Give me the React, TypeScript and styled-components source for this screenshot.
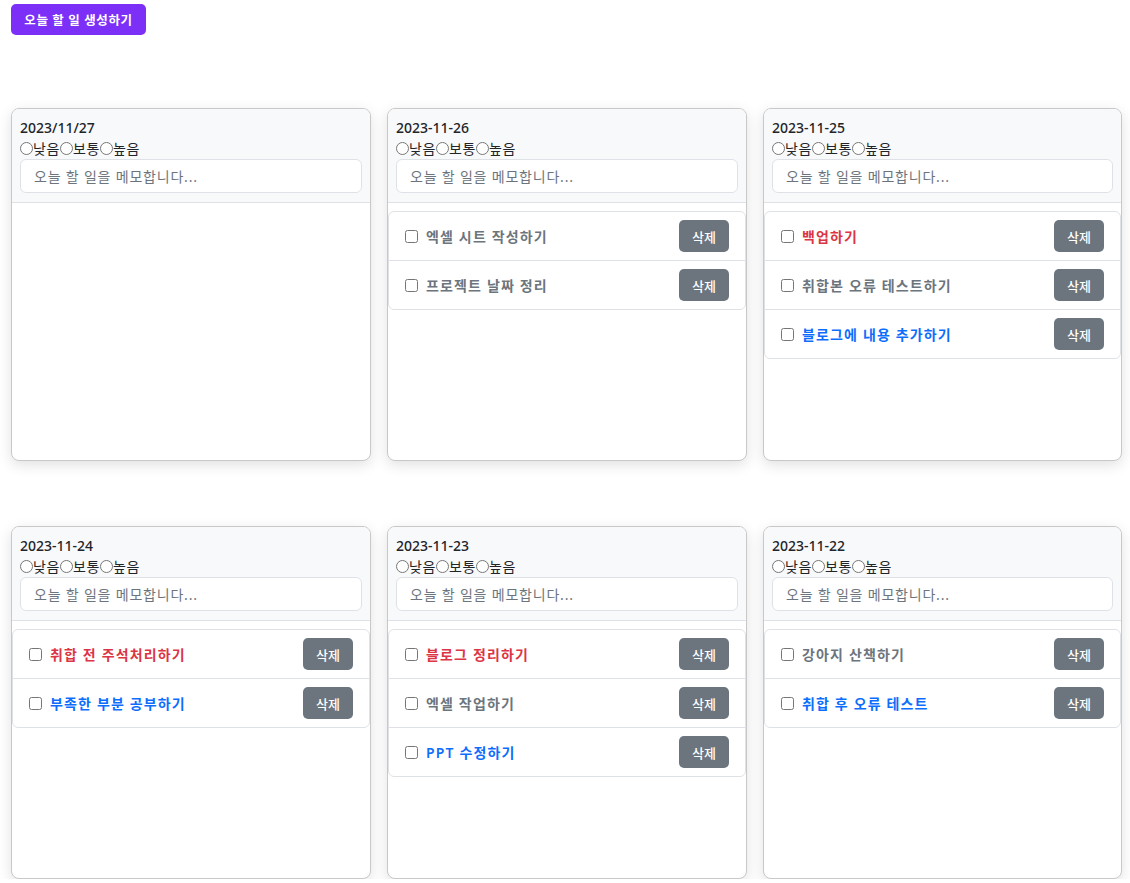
import React from "react";
import styled, { createGlobalStyle } from "styled-components";

const GlobalStyle = createGlobalStyle`
  html, body { margin: 0; padding: 0; background: #fff; }
  body {
    font-family: "Noto Sans", "Noto Sans CJK KR", sans-serif;
    color: #212529;
    font-size: 14px;
  }
  * { box-sizing: border-box; }
`;

type Tone = "red" | "gray" | "blue";

interface Todo { text: string; tone: Tone; }
interface Day { date: string; todos: Todo[]; }

const days: Day[] = [
  { date: "2023/11/27", todos: [] },
  {
    date: "2023-11-26",
    todos: [
      { text: "엑셀 시트 작성하기", tone: "gray" },
      { text: "프로젝트 날짜 정리", tone: "gray" },
    ],
  },
  {
    date: "2023-11-25",
    todos: [
      { text: "백업하기", tone: "red" },
      { text: "취합본 오류 테스트하기", tone: "gray" },
      { text: "블로그에 내용 추가하기", tone: "blue" },
    ],
  },
  {
    date: "2023-11-24",
    todos: [
      { text: "취합 전 주석처리하기", tone: "red" },
      { text: "부족한 부분 공부하기", tone: "blue" },
    ],
  },
  {
    date: "2023-11-23",
    todos: [
      { text: "블로그 정리하기", tone: "red" },
      { text: "엑셀 작업하기", tone: "gray" },
      { text: "PPT 수정하기", tone: "blue" },
    ],
  },
  {
    date: "2023-11-22",
    todos: [
      { text: "강아지 산책하기", tone: "gray" },
      { text: "취합 후 오류 테스트", tone: "blue" },
    ],
  },
];

const toneColor: Record<Tone, string> = {
  red: "#dc3545",
  gray: "#6c757d",
  blue: "#0d6efd",
};

const Page = styled.div`
  padding: 4px 8px 0 11px;
`;

const CreateButton = styled.button`
  display: block;
  height: 31px;
  width: 135px;
  border: none;
  border-radius: 5px;
  background: #7b2ff7;
  color: #fff;
  font-family: "Noto Sans", "Noto Sans CJK KR", sans-serif;
  font-size: 12.5px;
  font-weight: 700;
  letter-spacing: 0.6px;
  padding: 0;
  cursor: pointer;
`;

const Grid = styled.div`
  display: grid;
  grid-template-columns: 360px 360px 1fr;
  column-gap: 16px;
  row-gap: 65px;
  margin-top: 73px;
`;

const Card = styled.div`
  height: 353px;
  border: 1px solid #c8c8c8;
  border-radius: 8px;
  background: #fff;
  box-shadow: 0 4px 14px rgba(0, 0, 0, 0.12);
  overflow: hidden;
  display: flex;
  flex-direction: column;
`;

const CardHeader = styled.div`
  background: #f8f9fa;
  border-bottom: 1px solid #dee2e6;
  padding: 8px 8px 9px 8px;
`;

const DateText = styled.div`
  font-size: 14px;
  font-weight: 500;
  line-height: 21px;
  color: #212529;
`;

const PriorityRow = styled.div`
  display: flex;
  align-items: center;
  font-size: 14px;
  line-height: 21px;
  color: #212529;
  letter-spacing: 0.6px;
`;

const Radio = styled.input`
  margin: 0;
  width: 13px;
  height: 13px;
`;

const MemoInput = styled.input`
  display: block;
  width: 100%;
  height: 34px;
  margin: 0;
  border: 1px solid #dee2e6;
  border-radius: 6px;
  background: #fff;
  padding: 0 13px;
  font-family: "Noto Sans", "Noto Sans CJK KR", sans-serif;
  font-size: 14px;
  letter-spacing: 0.8px;
  color: #212529;
  &::placeholder { color: #6c757d; }
`;

const ListGroup = styled.ul`
  list-style: none;
  margin: 8px 0 0 0;
  padding: 0;
  border: 1px solid #dee2e6;
  border-radius: 6px;
`;

const ListItem = styled.li`
  box-sizing: content-box;
  height: 48px;
  display: flex;
  align-items: center;
  padding: 0 16px;
  & + & { border-top: 1px solid #dee2e6; }
`;

const Check = styled.input`
  margin: 0 8px 0 0;
  width: 13px;
  height: 13px;
`;

const TodoText = styled.span<{ $tone: Tone }>`
  flex: 1;
  font-size: 14px;
  font-weight: 600;
  letter-spacing: 1.15px;
  color: ${(p) => toneColor[p.$tone]};
`;

const DeleteButton = styled.button`
  width: 50px;
  height: 32px;
  border: none;
  border-radius: 5px;
  background: #6c757d;
  color: #fff;
  font-family: "Noto Sans", "Noto Sans CJK KR", sans-serif;
  font-size: 13px;
  font-weight: 500;
  padding: 0;
`;

function DayCard({ day, idx }: { day: Day; idx: number }) {
  return (
    <Card>
      <CardHeader>
        <DateText>{day.date}</DateText>
        <PriorityRow>
          <Radio type="radio" name={`p${idx}`} />
          <span>낮음</span>
          <Radio type="radio" name={`p${idx}`} />
          <span>보통</span>
          <Radio type="radio" name={`p${idx}`} />
          <span>높음</span>
        </PriorityRow>
        <MemoInput placeholder="오늘 할 일을 메모합니다..." />
      </CardHeader>
      {day.todos.length > 0 && (
        <ListGroup>
          {day.todos.map((t, i) => (
            <ListItem key={i}>
              <Check type="checkbox" />
              <TodoText $tone={t.tone}>{t.text}</TodoText>
              <DeleteButton>삭제</DeleteButton>
            </ListItem>
          ))}
        </ListGroup>
      )}
    </Card>
  );
}

export default function App() {
  return (
    <>
      <GlobalStyle />
      <Page>
        <CreateButton>오늘 할 일 생성하기</CreateButton>
        <Grid>
          {days.map((d, i) => (
            <DayCard key={i} day={d} idx={i} />
          ))}
        </Grid>
      </Page>
    </>
  );
}
